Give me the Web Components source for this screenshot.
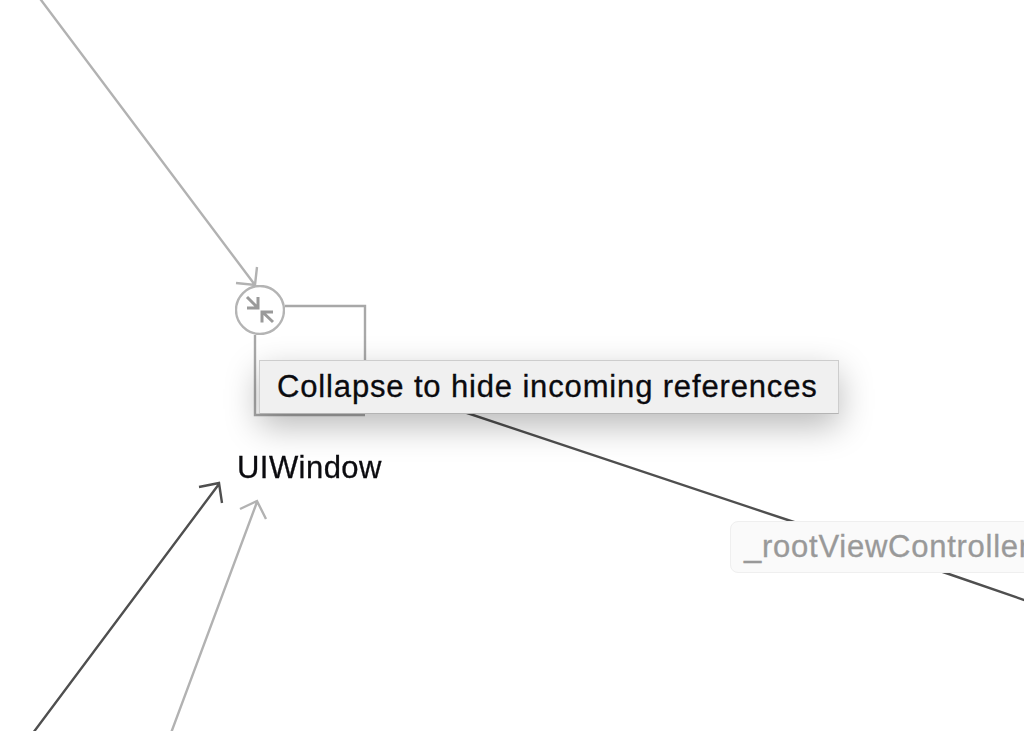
<!DOCTYPE html>
<html>
<head>
<meta charset="utf-8">
<title>Reference graph</title>
<style>
  html, body { margin: 0; height: 100%; background: #fff; overflow: hidden; }
</style>
</head>
<body>
<graph-canvas>
  <graph-edges></graph-edges>
  <collapse-toggle style="left:235px;top:285px"></collapse-toggle>
  <graph-node style="left:237px;top:449px">UIWindow</graph-node>
  <edge-label style="left:730px;top:521px">_rootViewController</edge-label>
  <graph-tooltip style="left:259px;top:360px">Collapse to hide incoming references</graph-tooltip>
</graph-canvas>

<script>
/* Free canvas: everything inside is placed by its diagram coordinates. */
class GraphCanvas extends HTMLElement {
  constructor() {
    super();
    this.attachShadow({ mode: 'open' }).innerHTML = `
      <style>
        :host { display: block; position: relative; width: 1024px; height: 731px; overflow: hidden; background: #fff; font-family: "Liberation Sans", Arial, sans-serif; -webkit-text-stroke: .3px currentColor; }
      </style>
      <slot></slot>`;
  }
}

class GraphEdges extends HTMLElement {
  constructor() {
    super();
    this.attachShadow({ mode: 'open' }).innerHTML = `
      <style>
        :host { display: block; position: absolute; inset: 0; }
        svg { display: block; filter: blur(0.4px); }
        path { fill: none; stroke-width: 2.4; stroke-linejoin: miter; }
        .light { stroke: #b2b2b2; }
        .mid { stroke: #a8a8a8; }
        .dark { stroke: #4f4f4f; }
      </style>
      <svg width="1024" height="731" viewBox="0 0 1024 731">
        <path class="light" d="M35 -8L255 285M236 283L255 285L257 267"/>
        <path class="mid" d="M285 306H365V362M255 335V415H365"/>
        <path class="dark" d="M440 404L800 524M940 571L1030 602"/>
        <path class="dark" d="M33 733L219 484M199 487L219 483L222 503"/>
        <path class="light" d="M171 733L257 502M240 509L257 501L266 519"/>
      </svg>`;
  }
}

/* Circle with the two inward arrows (collapse glyph). */
class CollapseToggle extends HTMLElement {
  constructor() {
    super();
    this.attachShadow({ mode: 'open' }).innerHTML = `
      <style>
        :host { display: block; position: absolute; width: 50px; height: 50px; }
        svg { display: block; filter: blur(0.4px); }
      </style>
      <svg width="50" height="50" viewBox="0 0 50 50" fill="none">
        <circle cx="25" cy="25" r="24" fill="#fff" stroke="#b4b4b4" stroke-width="2.400"/>
        <path d="M12 12L23 23M12 23H23V12" stroke="#9a9a9a" stroke-width="3"/>
        <path d="M27.500 27L38 37M27 37.500V27H38" stroke="#9a9a9a" stroke-width="3"/>
      </svg>`;
  }
}

class GraphNode extends HTMLElement {
  constructor() {
    super();
    this.attachShadow({ mode: 'open' }).innerHTML = `
      <style>
        :host { display: block; position: absolute; font-size: 31px; letter-spacing: .45px; line-height: 38px; color: #0b0b0f; white-space: nowrap; filter: blur(0.3px); }
      </style>
      <slot></slot>`;
  }
}

class EdgeLabel extends HTMLElement {
  constructor() {
    super();
    this.attachShadow({ mode: 'open' }).innerHTML = `
      <style>
        :host { display: block; position: absolute; box-sizing: border-box; height: 52px; padding: 0 14px 0 13px; font-size: 31px; letter-spacing: .75px; line-height: 50px; color: #999; white-space: nowrap; background: #fafafa; border: 1px solid #efefef; border-radius: 8px; }
      </style>
      <slot></slot>`;
  }
}

class GraphTooltip extends HTMLElement {
  constructor() {
    super();
    this.attachShadow({ mode: 'open' }).innerHTML = `
      <style>
        :host { display: block; position: absolute; box-sizing: border-box; width: 580px; height: 54px; padding: 0 17px; font-size: 31px; letter-spacing: .85px; line-height: 52px; color: #0a0a0e; white-space: nowrap; background: #f0f0f0; border: 1px solid #cdcdcd; border-bottom-color: #b4b4b4; box-shadow: 0 12px 34px rgba(0, 0, 0, .28); }
      </style>
      <slot></slot>`;
  }
}

customElements.define('graph-canvas', GraphCanvas);
customElements.define('graph-edges', GraphEdges);
customElements.define('collapse-toggle', CollapseToggle);
customElements.define('graph-node', GraphNode);
customElements.define('edge-label', EdgeLabel);
customElements.define('graph-tooltip', GraphTooltip);
</script>
</body>
</html>
